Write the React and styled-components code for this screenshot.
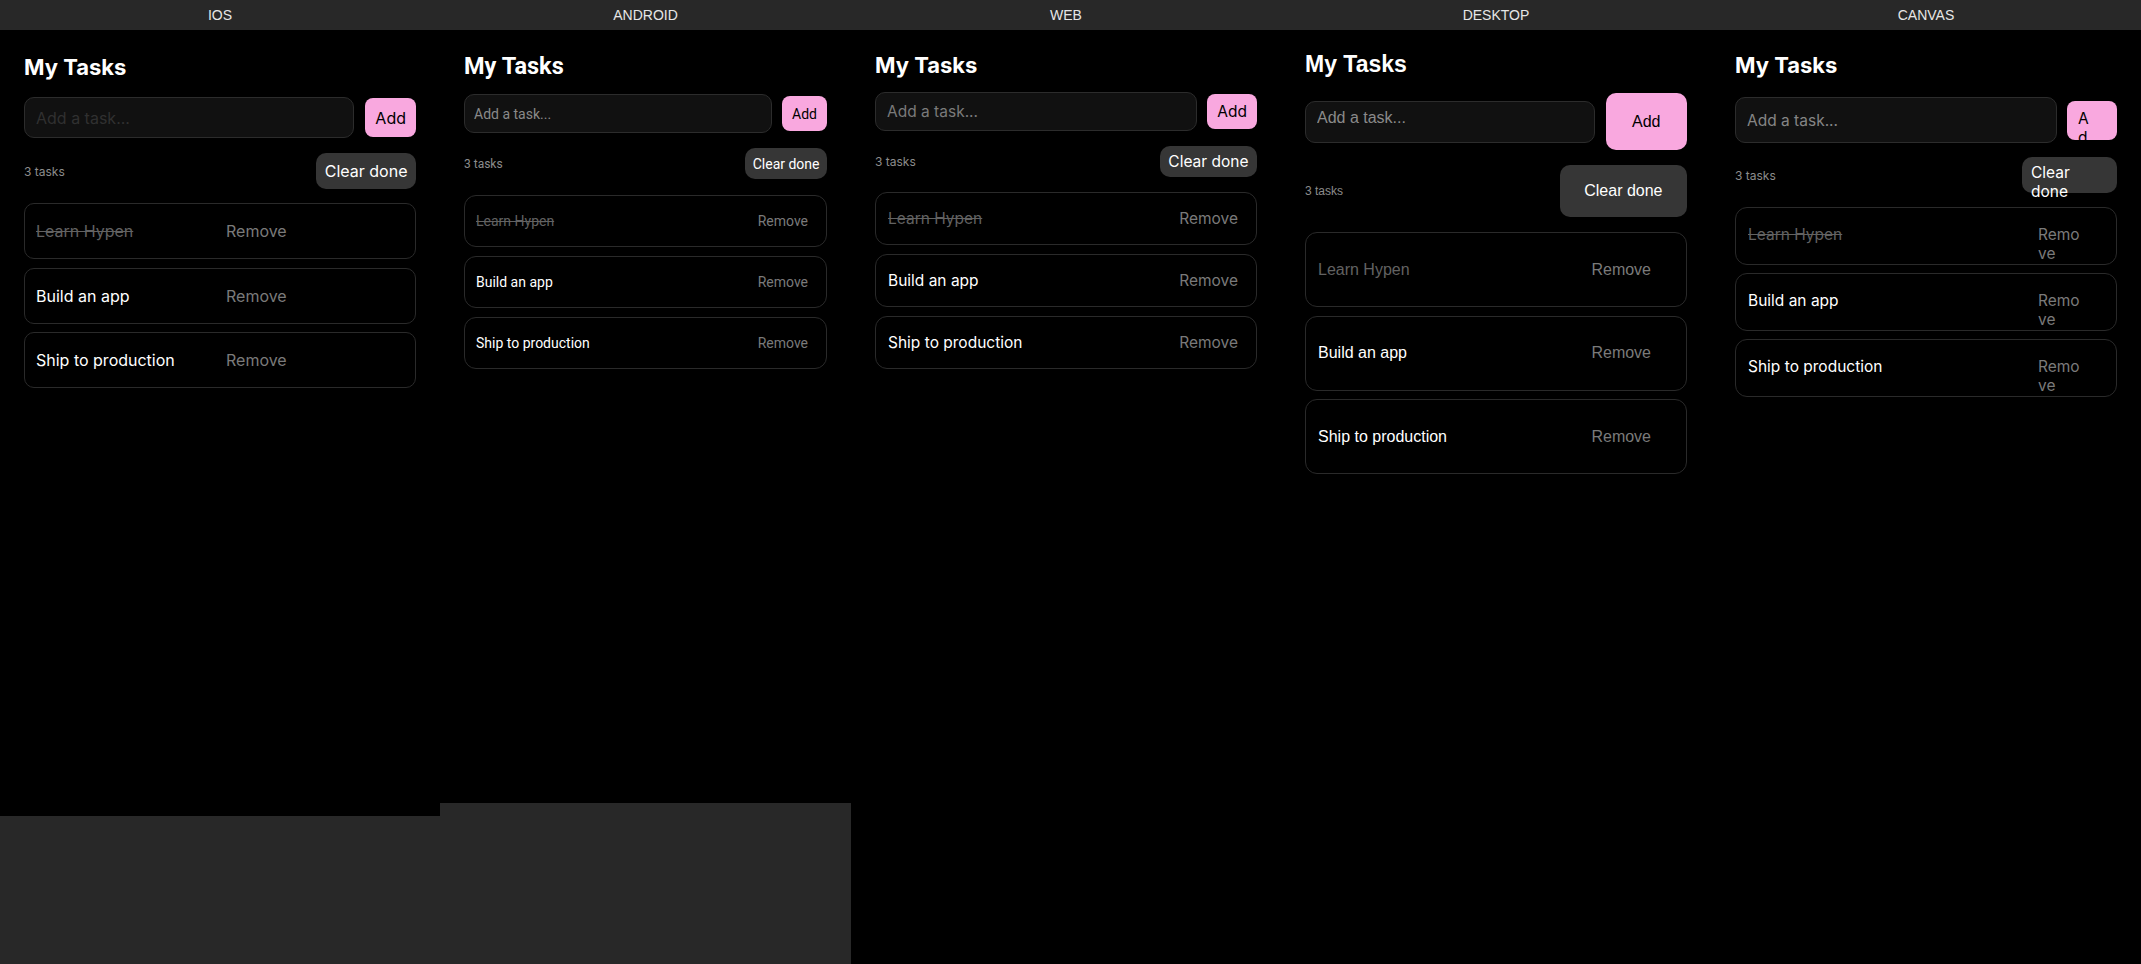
import React, { useState } from "react";
import styled, { createGlobalStyle, ThemeProvider } from "styled-components";

const GlobalStyle = createGlobalStyle`
  html, body {
    margin: 0;
    padding: 0;
    background: #282828;
  }
  #root {
    height: 100vh;
  }
  * {
    box-sizing: border-box;
  }
`;

const inter = 'Inter, "Noto Sans", sans-serif';

// one theme per simulated platform
const ios = {
  font: inter,
  padTop: 24,
  padX: 24,
  titleSize: 22,
  titleLH: 27,
  titleGap: 16,
  inputH: 41,
  inputPad: "0 11px",
  inputSize: 16,
  placeholder: "#303030",
  rowGap: 11,
  addH: 39,
  addW: "auto",
  addPad: "0 10px",
  addRadius: 8,
  btnSize: 16,
  btnLH: "normal",
  btnAlign: "center",
  metaGap: 15,
  clearH: 36,
  clearW: "auto",
  clearPad: "0 8.5px",
  clearOverflow: "hidden",
  listGap: 14,
  cardH: 56,
  cardGap: 8.5,
  cardPad: "0 11px",
  cardAlign: "center",
  cardRadius: 10,
  textSize: 16,
  textLH: "normal",
  split: true,
  removePad: "0",
  removeW: "auto",
  doneDecoration: "line-through",
};

const android = {
  ...ios,
  font: 'Roboto, "Noto Sans", sans-serif',
  padTop: 22,
  titleSize: 23.5,
  titleLH: 28,
  titleGap: 14,
  inputH: 39,
  inputPad: "0 9px",
  inputSize: 14,
  placeholder: "#8a8a8a",
  rowGap: 10,
  addH: 35,
  addPad: "0 10px",
  btnSize: 14,
  clearH: 31,
  clearPad: "0 7.5px",
  listGap: 16,
  cardH: 51.5,
  cardGap: 9.5,
  cardRadius: 12,
  textSize: 14,
  split: false,
  removePad: "0 7px 0 0",
};

const web = {
  ...ios,
  padTop: 22,
  titleGap: 13,
  inputH: 39,
  inputPad: "0 11px",
  inputSize: 15.5,
  placeholder: "#7a7a7a",
  rowGap: 10,
  addH: 35,
  btnSize: 15.5,
  clearH: 31,
  clearPad: "0 8.5px",
  listGap: 15,
  cardH: 53,
  cardGap: 9,
  cardPad: "0 12px",
  cardRadius: 12,
  textSize: 15.5,
  split: false,
  removePad: "0 6px 0 0",
};

const desktop = {
  ...ios,
  font: '"Liberation Sans", Arial, sans-serif',
  padTop: 21,
  titleSize: 23,
  titleLH: 26,
  titleGap: 16,
  inputH: 42,
  inputPad: "0 11px 8px",
  inputSize: 16,
  placeholder: "#8a8a8a",
  rowGap: 11,
  addH: 57,
  addPad: "0 26.5px",
  addRadius: 10,
  btnSize: 16,
  clearH: 52,
  clearPad: "0 24.5px",
  listGap: 15,
  cardH: 75,
  cardGap: 8.5,
  cardPad: "0 12px",
  cardRadius: 12,
  textSize: 16,
  split: false,
  removePad: "0 23px 0 0",
  doneDecoration: "none",
};

const canvas = {
  ...web,
  titleGap: 18,
  inputH: 46,
  inputPad: "0 11px",
  placeholder: "#858585",
  addH: 39,
  addW: "50px",
  addPad: "8px 24px 0 11px",
  btnLH: "19px",
  btnAlign: "flex-start",
  metaGap: 14,
  clearH: 36,
  clearW: "95px",
  clearPad: "6px 20px 0 9px",
  clearOverflow: "visible",
  listGap: 14,
  cardH: 58,
  cardGap: 8,
  cardPad: "17px 34px 0 12px",
  cardAlign: "flex-start",
  textLH: "19px",
  removePad: "0",
  removeW: "44px",
};

const platforms = [
  { label: "IOS", width: 440, frameHeight: 786, theme: ios },
  { label: "ANDROID", width: 411, frameHeight: 773, theme: android },
  { label: "WEB", width: 430, theme: web },
  { label: "DESKTOP", width: 430, theme: desktop },
  { label: "CANVAS", width: 430, theme: canvas },
];

const initialTasks = [
  { id: 1, text: "Learn Hypen", done: true },
  { id: 2, text: "Build an app", done: false },
  { id: 3, text: "Ship to production", done: false },
];

const Page = styled.div`
  display: flex;
  height: 100vh;
  background: #282828;
  overflow: hidden;
`;

const Column = styled.div`
  display: flex;
  flex-direction: column;
  flex: none;
  width: ${(p) => p.$width}px;
`;

const PlatformLabel = styled.div`
  height: 30px;
  display: flex;
  align-items: center;
  justify-content: center;
  font-family: "Liberation Sans", Arial, sans-serif;
  font-size: 14px;
  color: #e6e6e6;
`;

const Frame = styled.div`
  display: flex;
  flex-direction: column;
  flex: ${(p) => (p.$height ? "none" : 1)};
  height: ${(p) => (p.$height ? `${p.$height}px` : "auto")};
  padding: ${(p) => p.theme.padTop}px ${(p) => p.theme.padX}px 0;
  background: #000;
  font-family: ${(p) => p.theme.font};
  color: #fff;
`;

const Title = styled.h1`
  margin: 0 0 ${(p) => p.theme.titleGap}px;
  font-size: ${(p) => p.theme.titleSize}px;
  line-height: ${(p) => p.theme.titleLH}px;
  font-weight: 700;
  color: #fff;
`;

const InputRow = styled.div`
  display: flex;
  align-items: center;
  gap: ${(p) => p.theme.rowGap}px;
`;

const TaskInput = styled.input`
  flex: 1;
  min-width: 0;
  height: ${(p) => p.theme.inputH}px;
  padding: ${(p) => p.theme.inputPad};
  background: #111;
  border: 1px solid #2c2c2c;
  border-radius: 10px;
  outline: none;
  color: #fff;
  font-family: inherit;
  font-size: ${(p) => p.theme.inputSize}px;

  &::placeholder {
    color: ${(p) => p.theme.placeholder};
  }
`;

const Button = styled.button`
  flex: none;
  display: flex;
  align-items: ${(p) => p.theme.btnAlign};
  justify-content: ${(p) => p.theme.btnAlign};
  text-align: left;
  border: none;
  font-family: inherit;
  font-size: ${(p) => p.theme.btnSize}px;
  line-height: ${(p) => p.theme.btnLH};
  cursor: pointer;
`;

const AddButton = styled(Button)`
  width: ${(p) => p.theme.addW};
  height: ${(p) => p.theme.addH}px;
  padding: ${(p) => p.theme.addPad};
  background: #f9a8df;
  color: #000;
  border-radius: ${(p) => p.theme.addRadius}px;
  overflow: hidden;
  word-break: break-all;
`;

const MetaRow = styled.div`
  display: flex;
  align-items: center;
  justify-content: space-between;
  margin-top: ${(p) => p.theme.metaGap}px;
`;

const Count = styled.span`
  font-size: 12px;
  color: #8c8c8c;
`;

const ClearButton = styled(Button)`
  width: ${(p) => p.theme.clearW};
  height: ${(p) => p.theme.clearH}px;
  padding: ${(p) => p.theme.clearPad};
  background: #363636;
  color: #fff;
  border-radius: 10px;
  overflow: ${(p) => p.theme.clearOverflow};
  white-space: ${(p) => (p.theme.clearW === "auto" ? "nowrap" : "normal")};
`;

const TaskList = styled.div`
  display: flex;
  flex-direction: column;
  gap: ${(p) => p.theme.cardGap}px;
  margin-top: ${(p) => p.theme.listGap}px;
`;

const TaskCard = styled.div`
  display: flex;
  align-items: ${(p) => p.theme.cardAlign};
  gap: 12px;
  height: ${(p) => p.theme.cardH}px;
  padding: ${(p) => p.theme.cardPad};
  border: 1px solid #2a2a2a;
  border-radius: ${(p) => p.theme.cardRadius}px;
  font-size: ${(p) => p.theme.textSize}px;
  line-height: ${(p) => p.theme.textLH};
`;

const TaskText = styled.span`
  flex: 1;
  min-width: 0;
  color: ${(p) => (p.$done ? "#626262" : "#fff")};
  text-decoration: ${(p) => (p.$done ? p.theme.doneDecoration : "none")};
  cursor: pointer;
`;

const RemoveButton = styled.button`
  flex: ${(p) => (p.theme.split ? 1 : "none")};
  width: ${(p) => p.theme.removeW};
  padding: ${(p) => p.theme.removePad};
  background: none;
  border: none;
  text-align: left;
  word-break: break-all;
  color: #7a7a7a;
  font: inherit;
  cursor: pointer;
`;

function TaskApp() {
  const [tasks, setTasks] = useState(initialTasks);
  const [draft, setDraft] = useState("");

  const addTask = () => {
    if (!draft.trim()) return;
    setTasks([...tasks, { id: Date.now(), text: draft.trim(), done: false }]);
    setDraft("");
  };

  const toggle = (id) =>
    setTasks(tasks.map((t) => (t.id === id ? { ...t, done: !t.done } : t)));

  return (
    <>
      <Title>My Tasks</Title>
      <InputRow>
        <TaskInput
          placeholder="Add a task..."
          value={draft}
          onChange={(e) => setDraft(e.target.value)}
          onKeyDown={(e) => e.key === "Enter" && addTask()}
        />
        <AddButton onClick={addTask}>Add</AddButton>
      </InputRow>
      <MetaRow>
        <Count>{tasks.length} tasks</Count>
        <ClearButton onClick={() => setTasks(tasks.filter((t) => !t.done))}>
          Clear done
        </ClearButton>
      </MetaRow>
      <TaskList>
        {tasks.map((task) => (
          <TaskCard key={task.id}>
            <TaskText $done={task.done} onClick={() => toggle(task.id)}>
              {task.text}
            </TaskText>
            <RemoveButton
              onClick={() => setTasks(tasks.filter((t) => t.id !== task.id))}
            >
              Remove
            </RemoveButton>
          </TaskCard>
        ))}
      </TaskList>
    </>
  );
}

export default function App() {
  return (
    <>
      <GlobalStyle />
      <Page>
        {platforms.map((p) => (
          <ThemeProvider key={p.label} theme={p.theme}>
            <Column $width={p.width}>
              <PlatformLabel>{p.label}</PlatformLabel>
              <Frame $height={p.frameHeight}>
                <TaskApp />
              </Frame>
            </Column>
          </ThemeProvider>
        ))}
      </Page>
    </>
  );
}
